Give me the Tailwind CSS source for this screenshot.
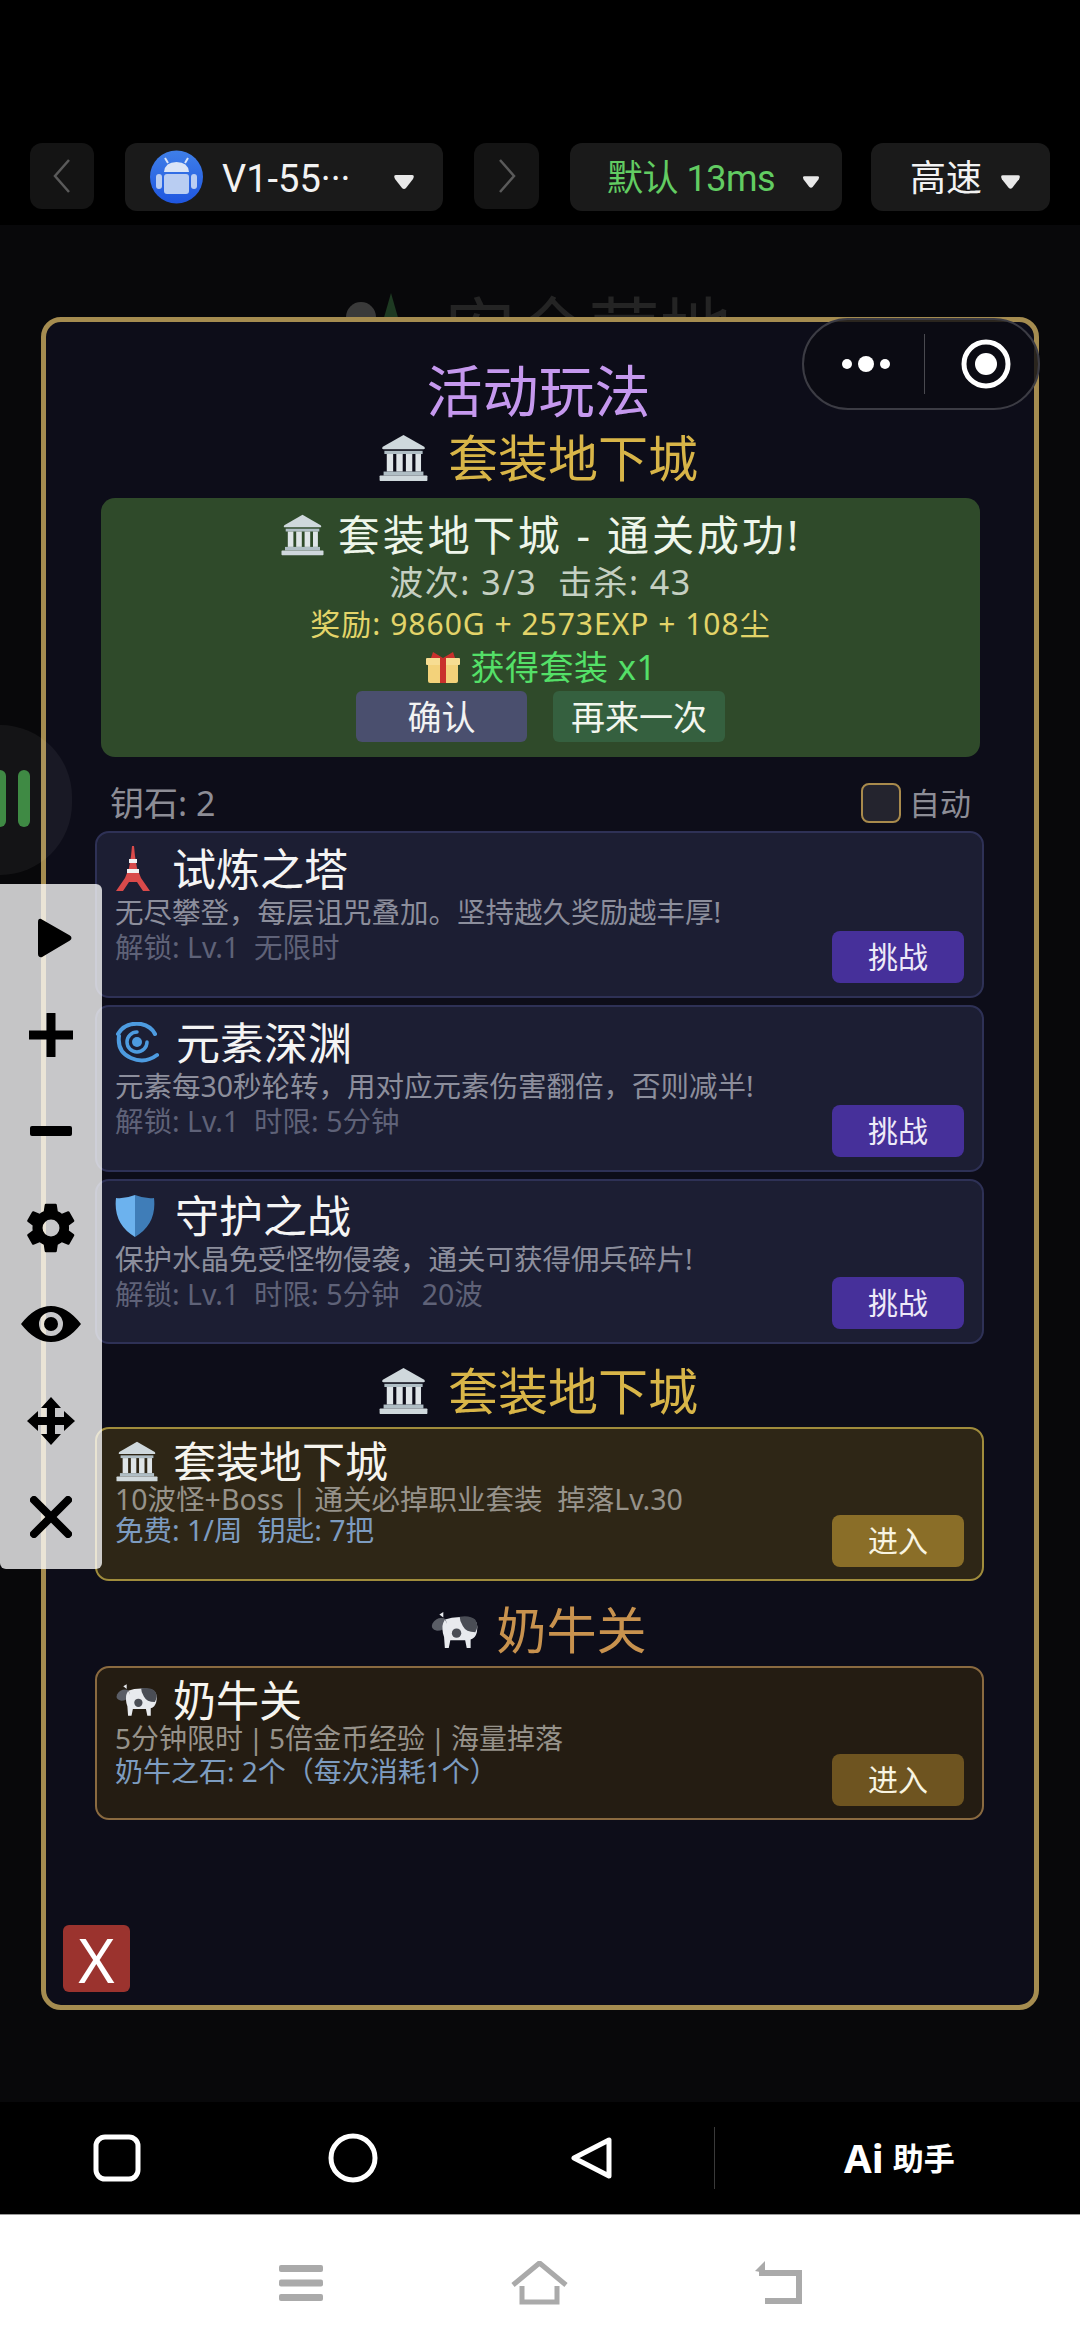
<!DOCTYPE html>
<html lang="zh">
<head>
  <meta charset="UTF-8" />
  <meta name="viewport" content="width=device-width, initial-scale=1.0"/>
  <title>活动玩法</title>
  <script src="https://cdn.jsdelivr.net/npm/@tailwindcss/browser@4"></script>
</head>
<body class="w-[1080px] h-[2345px] relative overflow-hidden bg-black text-white font-['Noto_Sans','Noto_Sans_CJK_SC',sans-serif]">

  <!-- shared emoji drawings -->
  <svg class="hidden" width="0" height="0">
    <defs>
      <symbol id="bank" viewBox="0 0 64 60">
        <path d="M32 1 L58 16 Q60 19 57 19 L7 19 Q4 19 6 16 Z" fill="#cfd8dc"/>
        <rect x="8" y="21" width="48" height="4" fill="#b0bec5"/>
        <rect x="11" y="25" width="8" height="22" fill="#dfe5e8"/>
        <rect x="23" y="25" width="8" height="22" fill="#dfe5e8"/>
        <rect x="35" y="25" width="8" height="22" fill="#dfe5e8"/>
        <rect x="47" y="25" width="7" height="22" fill="#dfe5e8"/>
        <rect x="7" y="47" width="50" height="5" fill="#b0bec5"/>
        <rect x="2" y="52" width="60" height="7" rx="1" fill="#cfd8dc"/>
      </symbol>
      <symbol id="cow" viewBox="0 0 64 50">
        <path d="M18 12 Q34 6 54 10 Q63 14 60 28 Q58 36 52 37 L52 48 L47 48 L45 38 L26 38 L24 48 L19 48 L18 34 Q14 24 18 12 Z" fill="#e8eaee"/>
        <path d="M38 8 Q52 6 58 12 Q63 20 58 28 Q46 28 42 20 Q38 14 38 8 Z" fill="#4a4d55"/>
        <circle cx="34" cy="29" r="6" fill="#4a4d55"/>
        <path d="M18 10 Q8 8 3 17 Q0 24 9 26 Q18 26 21 19 Q22 13 18 10 Z" fill="#5a5d66"/>
        <path d="M12 5 L17 2 L17 9 Z" fill="#e8eaee"/>
        <path d="M19 12 Q24 18 22 26 L17 27 Q14 20 19 12 Z" fill="#e8eaee"/>
      </symbol>
    </defs>
  </svg>

  <!-- top bar -->
  <header class="h-[225px] pt-[143px] pl-[30px] flex items-start gap-[31px] bg-black font-['Roboto','Noto_Sans_CJK_SC',sans-serif]">
    <div class="w-[64px] h-[66px] rounded-xl bg-[#141414] flex items-center justify-center">
      <svg width="18" height="34" viewBox="0 0 18 34" fill="none" stroke="#5a5a5a" stroke-width="2.5"><path d="M16 1 L2 17 L16 33"/></svg>
    </div>
    <div class="w-[318px] h-[68px] rounded-xl bg-[#1a1a1a] flex items-center pl-[25px]">
      <svg width="53" height="54" viewBox="0 0 53 54">
        <defs>
          <linearGradient id="droid" x1="0" y1="0" x2="0" y2="1">
            <stop offset="0" stop-color="#3f7fe8"/>
            <stop offset="1" stop-color="#1f56e0"/>
          </linearGradient>
        </defs>
        <circle cx="26.5" cy="27" r="26.5" fill="url(#droid)"/>
        <path d="M14 22 Q15 12 26.5 12 Q38 12 39 22 Z" fill="#d9e4f7"/>
        <path d="M18 13 L15 8 M35 13 L38 8" stroke="#d9e4f7" stroke-width="2"/>
        <rect x="14" y="24" width="25" height="20" rx="3" fill="#b9cdf2"/>
        <rect x="6" y="24" width="6" height="15" rx="3" fill="#b9cdf2"/>
        <rect x="41" y="24" width="6" height="15" rx="3" fill="#b9cdf2"/>
      </svg>
      <span class="ml-[19px] mt-[4px] text-[38px] leading-none text-[#f2f2f2]">V1-55···</span>
      <svg class="ml-auto mr-[28px] mt-[10px]" width="22" height="16" viewBox="0 0 22 16"><path d="M3 1 H19 Q22 1 20 5 L13 14 Q11 16 9 14 L2 5 Q0 1 3 1 Z" fill="#e8e8e8"/></svg>
    </div>
    <div class="w-[65px] h-[66px] rounded-xl bg-[#141414] flex items-center justify-center">
      <svg width="18" height="34" viewBox="0 0 18 34" fill="none" stroke="#5a5a5a" stroke-width="2.5"><path d="M2 1 L16 17 L2 33"/></svg>
    </div>
    <div class="w-[272px] h-[68px] rounded-xl bg-[#1a1a1a] flex items-center pl-[37px]">
      <span class="mt-[4px] text-[36px] leading-none tracking-[-0.5px] text-[#62cc62]">默认 13ms</span>
      <svg class="ml-auto mr-[22px] mt-[10px]" width="18" height="16" viewBox="0 0 22 16"><path d="M3 1 H19 Q22 1 20 5 L13 14 Q11 16 9 14 L2 5 Q0 1 3 1 Z" fill="#e8e8e8"/></svg>
    </div>
    <div class="-ml-[2px] w-[179px] h-[68px] rounded-xl bg-[#1a1a1a] flex items-center pl-[39px]">
      <span class="mt-[4px] text-[36px] leading-none text-[#f2f2f2]">高速</span>
      <svg class="ml-auto mr-[29px] mt-[10px]" width="21" height="16" viewBox="0 0 22 16"><path d="M3 1 H19 Q22 1 20 5 L13 14 Q11 16 9 14 L2 5 Q0 1 3 1 Z" fill="#e8e8e8"/></svg>
    </div>
  </header>

  <!-- game area -->
  <main class="h-[1877px] pt-[92px] pl-[41px] bg-[#08080a] relative">
    <!-- faded page title behind the dialog -->
    <div class="absolute left-[345px] top-[68px] flex items-start gap-[33px] text-[72px] leading-none text-[#242424]">
      <svg width="66" height="72" viewBox="0 0 66 72"><circle cx="16" cy="24" r="15" fill="#3a3a3a"/><path d="M46 0 L62 56 L30 56 Z" fill="#1e3a22"/></svg>
      <span>安全营地</span>
    </div>

    <section class="relative w-[998px] h-[1693px] rounded-[20px] border-[5px] border-[#a58c50] bg-[#0d0d19] pt-[40px]">
      <h2 class="h-[56px] pr-[3px] text-center text-[56px] leading-[56px] text-[#c598ee]">活动玩法</h2>

      <div class="mt-[14px] h-[52px] pr-[4px] flex items-center justify-center gap-[19px] text-[50px] leading-none text-[#d8b548]">
        <svg width="51" height="48"><use href="#bank"/></svg>
        <span>套装地下城</span>
      </div>

      <!-- result box -->
      <div class="mt-[14px] ml-[55px] w-[879px] h-[259px] rounded-[14px] bg-[#2f4a2a] pt-[13px] flex flex-col items-center">
        <div class="h-[48px] flex items-center gap-[13px] text-[42px] leading-none tracking-[3px] text-[#eef6ea]">
          <svg width="45" height="42"><use href="#bank"/></svg>
          <span>套装地下城 - 通关成功!</span>
        </div>
        <div class="mt-[3px] h-[40px] text-[34px] leading-[40px] tracking-[1.5px] text-[#c5d0c2]">波次: 3/3&nbsp; 击杀: 43</div>
        <div class="mt-[4px] h-[36px] text-[30px] leading-[36px] tracking-[1px] text-[#e3d469]">奖励: 9860G + 2573EXP + 108尘</div>
        <div class="mt-[5px] h-[40px] flex items-center gap-[10px] text-[34px] leading-none tracking-[0.5px] text-[#54e068]">
          <svg width="36" height="33" viewBox="0 0 36 33">
            <rect x="3" y="11" width="30" height="21" rx="2" fill="#f3d27a"/>
            <rect x="1" y="7" width="34" height="7" rx="1" fill="#f7dd92"/>
            <rect x="15" y="7" width="6" height="25" fill="#c9302c"/>
            <path d="M18 7 L8 1 L6 7 Z M18 7 L28 1 L30 7 Z" fill="#c9302c"/>
          </svg>
          <span>获得套装 x1</span>
        </div>
        <div class="mt-[4px] flex gap-[26px]">
          <button class="w-[171px] h-[51px] rounded-md bg-[#4a4f6e] text-[34px] leading-none text-[#f2f2f2]">确认</button>
          <button class="w-[172px] h-[51px] rounded-md bg-[#35603f] text-[34px] leading-none text-[#f2f6ee]">再来一次</button>
        </div>
      </div>

      <!-- stones and auto toggle -->
      <div class="ml-[64px] mr-[63px] h-[74px] pt-[18px] flex items-center justify-between text-[34px] leading-none text-[#8d8d96]">
        <span>钥石: 2</span>
        <div class="flex items-center gap-[8px] text-[31px]">
          <span class="w-[40px] h-[40px] rounded-lg border-2 border-[#a88a4c] bg-[#24242e]"></span>
          <span>自动</span>
        </div>
      </div>

      <!-- cards -->
      <div class="ml-[49px] w-[889px] flex flex-col">
        <article class="h-[167px] rounded-[14px] border-2 border-[#2e3156] bg-[#1c1e33] pl-[18px] pr-[18px] pb-[13px] pt-[11px] flex justify-between items-end">
          <div class="self-start">
            <div class="h-[50px] flex items-center gap-[21px] text-[44px] leading-none text-[#f4f4f4]">
              <svg width="36" height="46" viewBox="0 0 36 46">
                <path d="M17 0 H19 L20 10 L22 22 L26 32 L35 45 H28 L22 36 H14 L8 45 H1 L10 32 L14 22 L16 10 Z" fill="#d94a4a"/>
                <rect x="14" y="13" width="8" height="4" fill="#f2f2f2"/>
                <rect x="12" y="23" width="12" height="4" fill="#f2f2f2"/>
              </svg>
              <span>试炼之塔</span>
            </div>
            <p class="h-[36px] text-[28.5px] leading-[36px] text-[#8c8e9c]">无尽攀登，每层诅咒叠加。坚持越久奖励越丰厚!</p>
            <p class="h-[34px] text-[28.5px] leading-[34px] text-[#5f6278]">解锁: Lv.1&nbsp; 无限时</p>
          </div>
          <button class="w-[132px] h-[52px] rounded-lg bg-[#46309a] text-[30px] leading-none text-[#eeeaf8]">挑战</button>
        </article>

        <article class="mt-[7px] h-[167px] rounded-[14px] border-2 border-[#2e3156] bg-[#1c1e33] pl-[18px] pr-[18px] pb-[13px] pt-[11px] flex justify-between items-end">
          <div class="self-start">
            <div class="h-[50px] flex items-center gap-[17px] text-[44px] leading-none text-[#f4f4f4]">
              <svg width="44" height="42" viewBox="0 0 44 42" fill="none" stroke="#4d9be0" stroke-linecap="round">
                <circle cx="22" cy="20" r="5" fill="#4d9be0" stroke="none"/>
                <path d="M32 20 A10 10 0 1 1 22 10" stroke-width="3.5"/>
                <path d="M3 12 Q10 0 26 2 Q36 4 40 12" stroke-width="4"/>
                <path d="M4 14 Q2 30 16 36 Q30 42 42 33" stroke-width="4"/>
              </svg>
              <span>元素深渊</span>
            </div>
            <p class="h-[36px] text-[28.5px] leading-[36px] text-[#8c8e9c]">元素每30秒轮转，用对应元素伤害翻倍，否则减半!</p>
            <p class="h-[34px] text-[28.5px] leading-[34px] text-[#5f6278]">解锁: Lv.1&nbsp; 时限: 5分钟</p>
          </div>
          <button class="w-[132px] h-[52px] rounded-lg bg-[#46309a] text-[30px] leading-none text-[#eeeaf8]">挑战</button>
        </article>

        <article class="mt-[7px] h-[165px] rounded-[14px] border-2 border-[#2e3156] bg-[#1c1e33] pl-[18px] pr-[18px] pb-[13px] pt-[10px] flex justify-between items-end">
          <div class="self-start">
            <div class="h-[50px] flex items-center gap-[20px] text-[44px] leading-none text-[#f4f4f4]">
              <svg width="40" height="44" viewBox="0 0 40 44">
                <path d="M20 1 Q30 5 39 4 Q42 30 20 43 Z" fill="#3f7db8"/>
                <path d="M20 1 Q10 5 1 4 Q-2 30 20 43 Z" fill="#6cb2ee"/>
              </svg>
              <span>守护之战</span>
            </div>
            <p class="h-[36px] text-[28.5px] leading-[36px] text-[#8c8e9c]">保护水晶免受怪物侵袭，通关可获得佣兵碎片!</p>
            <p class="h-[34px] text-[28.5px] leading-[34px] text-[#5f6278]">解锁: Lv.1&nbsp; 时限: 5分钟&nbsp;&nbsp; 20波</p>
          </div>
          <button class="w-[132px] h-[52px] rounded-lg bg-[#46309a] text-[30px] leading-none text-[#eeeaf8]">挑战</button>
        </article>
      </div>

      <div class="mt-[21px] h-[52px] pr-[4px] flex items-center justify-center gap-[19px] text-[50px] leading-none text-[#d8b548]">
        <svg width="51" height="48"><use href="#bank"/></svg>
        <span>套装地下城</span>
      </div>

      <article class="mt-[10px] ml-[49px] w-[889px] h-[154px] rounded-[14px] border-2 border-[#a08c3c] bg-[#2e2616] pl-[18px] pr-[18px] pb-[12px] pt-[9px] flex justify-between items-end">
        <div class="self-start">
          <div class="h-[46px] flex items-center gap-[14px] text-[43px] leading-none text-[#f6f4ee]">
            <svg width="44" height="41"><use href="#bank"/></svg>
            <span>套装地下城</span>
          </div>
          <p class="h-[30px] text-[28.5px] leading-[30px] text-[#96928a]">10波怪+Boss | 通关必掉职业套装&nbsp; 掉落Lv.30</p>
          <p class="h-[33px] text-[28.5px] leading-[33px] text-[#7d9cc0]">免费: 1/周&nbsp; 钥匙: 7把</p>
        </div>
        <button class="w-[132px] h-[52px] rounded-lg bg-[#8a6e28] text-[30px] leading-none text-[#f8f4e2]">进入</button>
      </article>

      <div class="mt-[23px] h-[52px] pr-[4px] flex items-center justify-center gap-[17px] text-[50px] leading-none text-[#c8924e]">
        <svg width="50" height="40"><use href="#cow"/></svg>
        <span>奶牛关</span>
      </div>

      <article class="mt-[10px] ml-[49px] w-[889px] h-[154px] rounded-[14px] border-2 border-[#8a6a40] bg-[#241c12] pl-[18px] pr-[18px] pb-[12px] pt-[9px] flex justify-between items-end">
        <div class="self-start">
          <div class="h-[46px] flex items-center gap-[14px] text-[43px] leading-none text-[#f6f4ee]">
            <svg width="44" height="36"><use href="#cow"/></svg>
            <span>奶牛关</span>
          </div>
          <p class="h-[30px] text-[28px] leading-[30px] text-[#96928a]">5分钟限时<span class="mx-[-2px]"> | </span>5倍金币经验<span class="mx-[-2px]"> | </span>海量掉落</p>
          <p class="h-[36px] text-[28px] leading-[36px] text-[#7d9cc0]">奶牛之石: 2个（每次消耗1个）</p>
        </div>
        <button class="w-[132px] h-[52px] rounded-lg bg-[#6e5420] text-[30px] leading-none text-[#f8f4e2]">进入</button>
      </article>

      <button class="mt-[105px] ml-[17px] w-[67px] h-[67px] rounded-md bg-[#9b332e] text-[62px] leading-none text-white">X</button>
    </section>

    <!-- mini program capsule -->
    <div class="absolute left-[802px] top-[93px] w-[238px] h-[92px] rounded-full border-2 border-[#3c3c44] bg-[#0b0b12]/80 flex items-center pl-[38px]">
      <svg width="48" height="16" viewBox="0 0 48 16" fill="#fff"><circle cx="5" cy="8" r="5"/><circle cx="24" cy="8" r="8"/><circle cx="43" cy="8" r="5"/></svg>
      <span class="ml-[34px] w-[1px] h-[60px] bg-[#4a4a50]"></span>
      <svg class="ml-[36px]" width="50" height="50" viewBox="0 0 50 50"><circle cx="25" cy="25" r="22" fill="none" stroke="#fff" stroke-width="5"/><circle cx="25" cy="25" r="11" fill="#fff"/></svg>
    </div>

    <!-- floating audio bubble -->
    <div class="absolute -left-[72px] top-[500px] w-[144px] h-[150px] rounded-full bg-white/5"></div>
    <div class="absolute left-0 top-[545px] flex gap-[12px]">
      <span class="w-[6px] h-[57px] rounded-r-md bg-[#3f8a44]"></span>
      <span class="w-[12px] h-[57px] rounded-md bg-[#3f8a44]"></span>
    </div>

    <!-- floating tool panel -->
    <aside class="absolute left-0 top-[659px] w-[102px] h-[685px] rounded-r-md rounded-bl-md bg-white/77 pt-[6px] flex flex-col text-black">
      <div class="h-[96.5px] flex items-center justify-center">
        <svg class="ml-[8px]" width="34" height="40" viewBox="0 0 34 40"><path d="M3 2 Q1 1 1 4 V36 Q1 39 4 38 L31 22 Q34 20 31 18 Z" fill="#000" stroke="#000" stroke-width="2" stroke-linejoin="round"/></svg>
      </div>
      <div class="h-[96.5px] flex items-center justify-center">
        <svg width="44" height="44" viewBox="0 0 44 44"><path d="M22 1 V43 M1 22 H43" stroke="#000" stroke-width="9" stroke-linecap="round"/></svg>
      </div>
      <div class="h-[96.5px] flex items-center justify-center">
        <svg width="44" height="10" viewBox="0 0 44 10"><rect x="1" y="0" width="42" height="10" rx="2" fill="#000"/></svg>
      </div>
      <div class="h-[96.5px] flex items-center justify-center">
        <svg width="58" height="58" viewBox="0 0 24 24"><path fill="#000" d="M19.4 13a7.5 7.5 0 0 0 0-2l2.1-1.6a.5.5 0 0 0 .1-.6l-2-3.5a.5.5 0 0 0-.6-.2l-2.5 1a7.300 7.300 0 0 0-1.700-1L14.400 2.400a.5.5 0 0 0-.5-.4h-4a.5.5 0 0 0-.5.4L9 5.100a7.300 7.300 0 0 0-1.700 1l-2.500-1a.5.5 0 0 0-.6.2l-2 3.500a.5.5 0 0 0 .1.6L4.400 11a7.500 7.500 0 0 0 0 2l-2.100 1.600a.5.5 0 0 0-.1.600l2 3.500a.5.5 0 0 0 .6.2l2.500-1a7.300 7.300 0 0 0 1.700 1l.4 2.700a.5.5 0 0 0 .5.4h4a.5.5 0 0 0 .5-.4l.4-2.700a7.300 7.300 0 0 0 1.700-1l2.500 1a.5.5 0 0 0 .6-.2l2-3.500a.5.5 0 0 0-.1-.6zM12 15.500a3.500 3.500 0 1 1 0-7 3.500 3.500 0 0 1 0 7z"/></svg>
      </div>
      <div class="h-[96.5px] flex items-center justify-center">
        <svg width="60" height="36" viewBox="0 0 60 36"><path fill-rule="evenodd" d="M0 18 Q14 0 30 0 Q46 0 60 18 Q46 36 30 36 Q14 36 0 18 Z M30 6 A12 12 0 1 0 30 30 A12 12 0 1 0 30 6 Z" fill="#000"/><circle cx="30" cy="18" r="7" fill="#000"/></svg>
      </div>
      <div class="h-[96.5px] flex items-center justify-center">
        <svg width="48" height="48" viewBox="0 0 48 48"><path fill="#000" d="M24 0 L34 11 H28 V20 H37 V14 L48 24 L37 34 V28 H28 V37 H34 L24 48 L14 37 H20 V28 H11 V34 L0 24 L11 14 V20 H20 V11 H14 Z"/></svg>
      </div>
      <div class="h-[96.5px] flex items-center justify-center">
        <svg width="42" height="42" viewBox="0 0 42 42"><path d="M4 4 L38 38 M38 4 L4 38" stroke="#000" stroke-width="8" stroke-linecap="round"/></svg>
      </div>
    </aside>
  </main>

  <!-- android navigation -->
  <nav class="h-[112px] bg-black flex items-center pl-[93px]">
    <svg width="48" height="48" viewBox="0 0 48 48"><rect x="3" y="3" width="42" height="42" rx="9" fill="none" stroke="#fff" stroke-width="5"/></svg>
    <svg class="ml-[187px]" width="50" height="50" viewBox="0 0 50 50"><circle cx="25" cy="25" r="22" fill="none" stroke="#fff" stroke-width="5"/></svg>
    <svg class="ml-[192px]" width="43" height="44" viewBox="0 0 43 44"><path d="M39 4 V40 L4 22 Z" fill="none" stroke="#fff" stroke-width="5" stroke-linejoin="round"/></svg>
    <span class="ml-[101px] w-[1px] h-[62px] bg-[#3a3a3a]"></span>
    <div class="ml-[129px] flex items-center gap-[9px] font-bold leading-none text-white">
      <span class="text-[40px]">Ai</span>
      <span class="text-[31px]">助手</span>
    </div>
  </nav>

  <!-- host app bar -->
  <footer class="h-[131px] bg-white border-t border-[#9a9a9a] flex items-center pl-[279px] pt-[5px]">
    <svg width="44" height="36" viewBox="0 0 44 36" fill="#aaa"><rect y="0" width="44" height="7" rx="2"/><rect y="14.500" width="44" height="7" rx="2"/><rect y="29" width="44" height="7" rx="2"/></svg>
    <svg class="ml-[188px]" width="57" height="44" viewBox="0 0 57 44" fill="none" stroke="#aaa" stroke-width="5"><path d="M2 24 L28.500 2 L55 24" stroke-linejoin="round"/><path d="M11 25 V41 H46 V25"/></svg>
    <svg class="ml-[187px]" width="47" height="44" viewBox="0 0 47 44" fill="none" stroke="#aaa" stroke-width="6"><path d="M4 12 H44 V40 H10"/><path d="M0 10 L10 0 V12 Z" fill="#aaa" stroke="none"/></svg>
  </footer>
</body>
</html>
